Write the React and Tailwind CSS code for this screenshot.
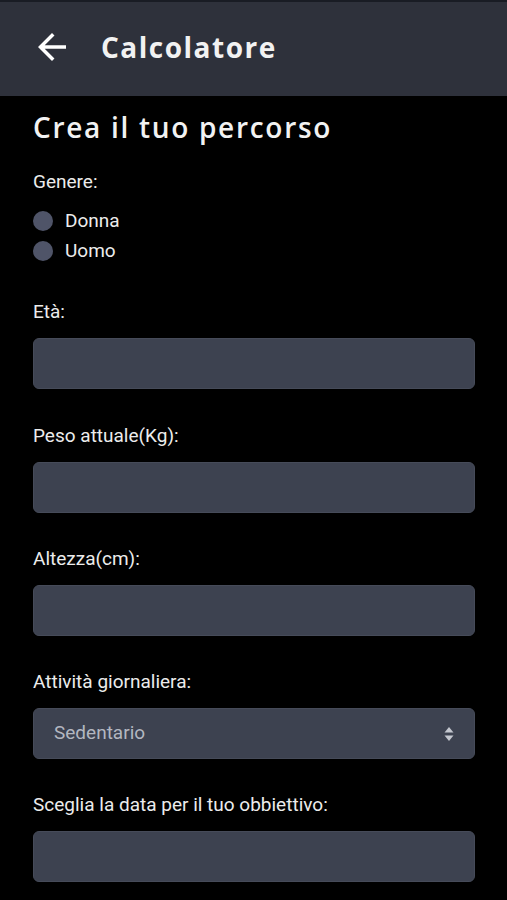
import React from "react";

function Field({ label, children }) {
  return (
    <div className="mt-[34.3px] flex flex-col">
      <div className="h-6 leading-6 text-[19px] text-[#ececec]">{label}</div>
      <div className="mt-[14px]">{children}</div>
    </div>
  );
}

function Input() {
  return <div className="h-[51px] w-full rounded-md bg-[#3d4250] border border-[#464b59]" />;
}

export default function App() {
  return (
    <div className="min-h-[900px] w-[507px] bg-black" style={{ fontFamily: "Roboto, 'Liberation Sans', sans-serif" }}>
      <header className="h-[96px] bg-[#2e313b] border-t-2 border-[#191c24] flex items-center">
        <svg viewBox="0 0 24 24" className="ml-[31px] -mt-1 w-[42px] h-[42px] fill-white">
          <path d="M20 11H7.83l5.59-5.59L12 4l-8 8 8 8 1.41-1.41L7.83 13H20v-2z" />
        </svg>
        <div
          className="ml-[28px] -mt-1 text-[28px] font-bold tracking-[1.5px] text-[#f2f2f2]"
          style={{ fontFamily: "'Open Sans', 'Liberation Sans', sans-serif" }}
        >
          Calcolatore
        </div>
      </header>
      <main className="pl-[33px] pr-[32px] pt-3 pb-6">
        <h1
          className="h-10 leading-10 text-[28px] font-semibold text-[#f2f2f2] tracking-[1.7px] -mt-[1px]"
          style={{ fontFamily: "'Open Sans', 'Liberation Sans', sans-serif" }}
        >
          Crea il tuo percorso
        </h1>
        <div className="mt-[23px] h-6 leading-6 text-[19px] text-[#ececec]">Genere:</div>
        <div className="mt-3 flex flex-col">
          {["Donna", "Uomo"].map((g) => (
            <div key={g} className="h-[30px] flex items-center">
              <span className="w-5 h-5 rounded-full bg-[#4f5468]" />
              <span className="ml-3 text-[19px] text-[#ececec]">{g}</span>
            </div>
          ))}
        </div>
        <Field label="Età:">
          <Input />
        </Field>
        <Field label="Peso attuale(Kg):">
          <Input />
        </Field>
        <Field label="Altezza(cm):">
          <Input />
        </Field>
        <Field label="Attività giornaliera:">
          <div className="h-[51px] w-full rounded-md bg-[#3d4250] border border-[#464b59] flex items-center justify-between pl-5 pr-5">
            <span className="text-[19px] text-[#b3b7c0]">Sedentario</span>
            <svg viewBox="0 0 10 16" className="w-[10px] h-[16px] fill-[#c4c7cf]">
              <path d="M5 1 L9.5 6.5 H0.5 Z" />
              <path d="M5 15 L9.5 9.5 H0.5 Z" />
            </svg>
          </div>
        </Field>
        <Field label="Sceglia la data per il tuo obbiettivo:">
          <Input />
        </Field>
      </main>
    </div>
  );
}
